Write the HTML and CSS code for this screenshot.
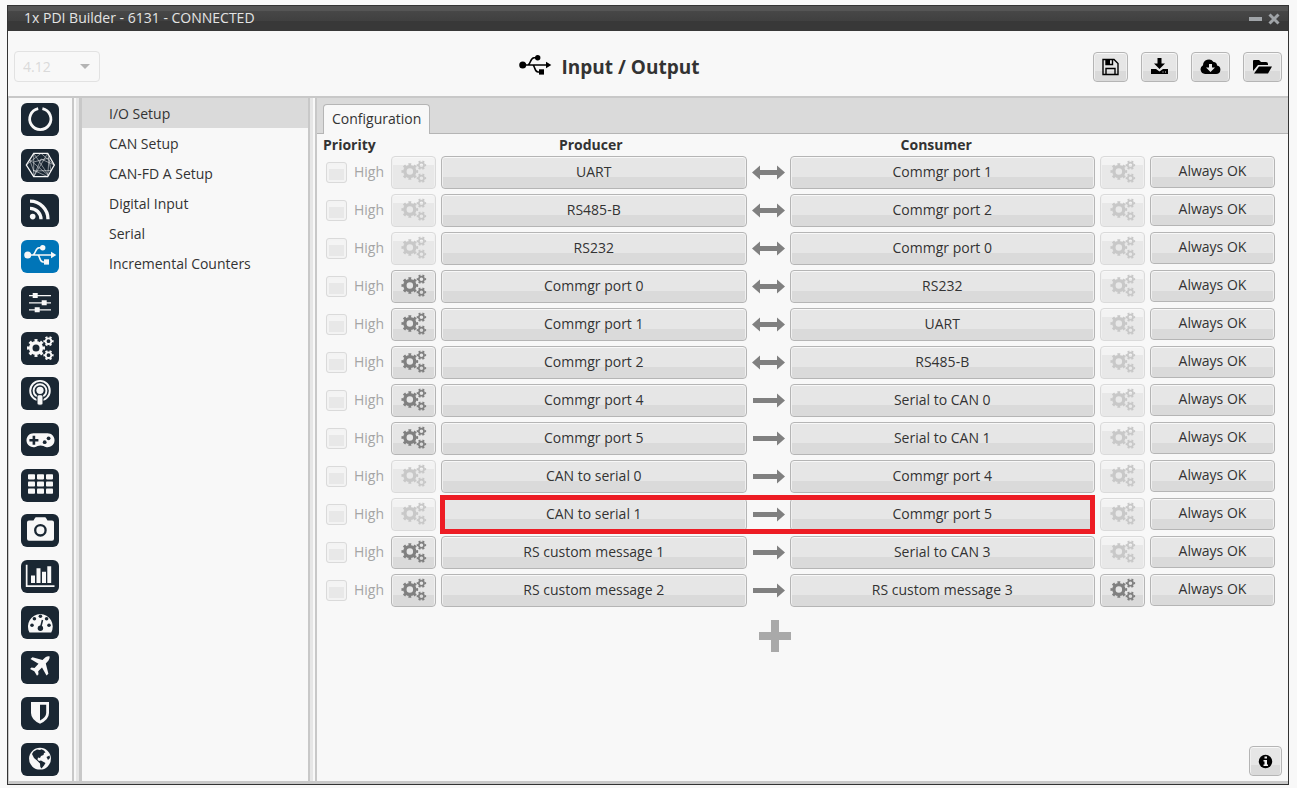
FILE: index.html
```html
<!DOCTYPE html>
<html lang="en">
<head>
    <meta charset="utf-8">
    <title>1x PDI Builder</title>
    <link rel="stylesheet" href="styles.css">
</head>
<body>
<!-- shared icons -->
<svg class="sprite" aria-hidden="true">
    <symbol id="usb" viewBox="0 0 38 33">
        <circle cx="6.7" cy="15" r="3.5"/>
        <path d="M6 15H31M12 15C15 14 14 8 18 7.7H22M17 15C19 16 18.5 22 22 22H25" fill="none" stroke="currentColor" stroke-width="1.6"/>
        <path d="M30 11.8L35.3 15L30 18.2Z"/>
        <circle cx="21.7" cy="7.7" r="2.7"/>
        <rect x="23" y="19.3" width="5" height="5.3"/>
    </symbol>
    <symbol id="gears" viewBox="0 0 28 24">
        <g fill="none" stroke="currentColor">
            <circle cx="9.5" cy="12" r="5.3" stroke-width="3.6"/>
            <circle cx="9.5" cy="12" r="7.5" stroke-width="3" pathLength="16" stroke-dasharray="1 1" stroke-dashoffset=".5"/>
            <circle cx="22" cy="5.2" r="2.8" stroke-width="1.8"/>
            <circle cx="22" cy="5.2" r="4.1" stroke-width="2" pathLength="12" stroke-dasharray="1 1" stroke-dashoffset=".5"/>
            <circle cx="22" cy="19.2" r="2.8" stroke-width="1.8"/>
            <circle cx="22" cy="19.2" r="4.1" stroke-width="2" pathLength="12" stroke-dasharray="1 1" stroke-dashoffset=".5"/>
        </g>
    </symbol>
    <symbol id="both" viewBox="0 0 33 15">
        <path d="M0 7.5L8 .5V5H25V.5L33 7.5L25 14.5V10H8V14.5Z"/>
    </symbol>
    <symbol id="right" viewBox="0 0 33 15">
        <path d="M1 5H25V.5L33 7.5L25 14.5V10H1Z"/>
    </symbol>
</svg>

<div class="window">
    <div class="titlebar">
        <span>1x PDI Builder - 6131 - CONNECTED</span>
        <div class="win-buttons">
            <button aria-label="Minimize"><svg width="13" height="12"><path d="M0 4H13V8H0Z"/></svg></button>
            <button aria-label="Close"><svg width="12" height="12"><path d="M1.5 1.5L10.5 10.5M10.5 1.5L1.5 10.5" stroke="currentColor" stroke-width="3"/></svg></button>
        </div>
    </div>

    <div class="header">
        <div class="version">
            <select aria-label="Version" disabled><option>4.12</option></select>
        </div>
        <h1><svg width="38" height="33"><use href="#usb"/></svg>Input / Output</h1>
        <div class="toolbar">
            <button class="btn" aria-label="Save"><svg width="17" height="18" viewBox="0 0 17 18"><path d="M1 1.5H12L16 5.5V16.5H1ZM4 16V10.5H13V16M4 2V6.5H10.5V2" fill="none" stroke="currentColor" stroke-width="1.4"/><path d="M4 2H8V6H4Z"/></svg></button>
            <button class="btn" aria-label="Download"><svg width="19" height="18" viewBox="0 0 19 18"><path d="M7.5 0H11.5V5.5H15L9.5 11L4 5.500H7.5ZM1 11H6L9.5 13.5L13 11H18V16H1Z"/><path d="M12.5 14H13.5M15 14H16" stroke="#ddd"/></svg></button>
            <button class="btn" aria-label="Download from cloud"><svg width="21" height="18" viewBox="0 0 21 18"><path d="M5 16A4.7 4.7 0 0 1 3 7.2A5.8 5.8 0 0 1 13.5 4A3.3 3.3 0 0 1 17 7.5A4.3 4.3 0 0 1 16 16Z"/><path d="M9 6H12V9.5H15L10.5 14L6 9.5H9Z" fill="#e6e6e6"/></svg></button>
            <button class="btn" aria-label="Open"><svg width="21" height="18" viewBox="0 0 21 18"><path d="M1 13V3Q1 2 2 2H7L9 4H14Q16 4 16 6V7H6ZM2 15.5L7 8.5H20L16 15.5Z"/></svg></button>
        </div>
    </div>

    <div class="body">
        <nav class="sidebar">
            <button aria-label="Power"><svg viewBox="0 0 38 33"><path d="M17.2 5.6A10.6 10.6 0 1 0 21.4 5.6" fill="none" stroke="currentColor" stroke-width="2.8"/></svg></button>
            <button aria-label="Mesh"><svg viewBox="0 0 38 33"><g fill="none" stroke="currentColor"><path d="M5.3 16L12.7 4.3H26.7L33.3 16L26.7 27.7H12.7Z" stroke-width="1.3"/><path d="M12.7 4.3V27.7L26.7 4.3L30 21.5L12.7 22L8.5 10.5L28 27L12.7 4.3M5.3 16L20 4.3L33.3 16L20 10L12.7 27.7M12 21L26.7 27.7L28 9L12.7 13" stroke-width=".5"/></g></svg></button>
            <button aria-label="Telemetry"><svg viewBox="0 0 38 33"><circle cx="11.7" cy="22.6" r="2.8"/><path d="M9 14.3A11 11 0 0 1 20 25.3M9 7.2A18 18 0 0 1 27 25.3" fill="none" stroke="currentColor" stroke-width="3.3"/></svg></button>
            <button class="active" aria-label="Input / Output"><svg><use href="#usb"/></svg></button>
            <button aria-label="Control"><svg viewBox="0 0 38 33"><path d="M8 9H30V10.3H8ZM8 16.2H30V17.5H8ZM8 23.3H30V24.6H8ZM11.7 7H16.7V12H11.7ZM20.7 14.3H25.7V19.3H20.7ZM13.7 21.3H18.7V26.3H13.7Z"/></svg></button>
            <button aria-label="Automations"><svg viewBox="0 0 38 33"><use href="#gears" x="5.5" y="4" width="28" height="24"/></svg></button>
            <button aria-label="Communications"><svg viewBox="0 0 38 33"><g fill="none" stroke="currentColor" stroke-width="1.9"><circle cx="19" cy="13.7" r="9.8"/><circle cx="19" cy="13.7" r="6.4"/></g><circle cx="19" cy="13.3" r="3.6"/><rect x="16" y="17.7" width="6" height="10.5" rx="2" stroke="#1a2733" stroke-width="1"/></svg></button>
            <button aria-label="Stick"><svg viewBox="0 0 38 33"><path d="M13 10.3H26A7 7 0 1 1 22.5 23Q19.5 22 16.5 23A7 7 0 1 1 13 10.3Z"/><path d="M12.9 12.8V21.8M8.4 17.3H17.4" stroke="#1a2733" stroke-width="2.6"/><g fill="#1a2733"><circle cx="27.6" cy="15.3" r="1.9"/><circle cx="23.7" cy="19.2" r="1.9"/></g></svg></button>
            <button aria-label="Variables"><svg viewBox="0 0 38 33"><g id="cells"><rect x="7" y="5.2" width="7" height="5.2" rx=".8"/><rect x="16" y="5.2" width="7" height="5.2" rx=".8"/><rect x="25" y="5.2" width="7" height="5.2" rx=".8"/></g><use href="#cells" y="7.2"/><use href="#cells" y="14.4"/></svg></button>
            <button aria-label="Camera"><svg viewBox="0 0 38 33"><path d="M8 6.5H12.5L14 4Q14.3 3.3 15 3.3H24Q24.7 3.3 25 4L26.5 6.5H31Q33 6.5 33 8.5V24.7Q33 26.7 31 26.7H8Q6 26.7 6 24.7V8.5Q6 6.5 8 6.5Z"/><circle cx="19.4" cy="16.3" r="5.2" fill="none" stroke="#1a2733" stroke-width="2.3"/></svg></button>
            <button aria-label="Charts"><svg viewBox="0 0 38 33"><path d="M4.8 4.7H6.5V25.2H33.5V26.9H4.8ZM10 15.5H14V23H10ZM15.5 8.3H19.5V23H15.5ZM21 11.7H25V23H21ZM26.3 6.3H30.2V23H26.3Z"/></svg></button>
            <button aria-label="Gauges"><svg viewBox="0 0 38 33"><path d="M8.5 26.5A12.4 12.4 0 1 1 30.2 26.5Z"/><g fill="#1a2733"><circle cx="11" cy="19.3" r="1.8"/><circle cx="13.4" cy="12.8" r="1.8"/><circle cx="19.4" cy="10.3" r="1.8"/><circle cx="25.6" cy="12.8" r="1.8"/><circle cx="28" cy="19.3" r="1.8"/><circle cx="19.4" cy="22.3" r="2.7"/></g><path d="M19.5 22L21.5 14" stroke="#1a2733" stroke-width="1.5"/></svg></button>
            <button aria-label="Plane"><svg viewBox="0 0 38 33"><path d="M28.5 5.3Q26.5 4.8 24.5 6.3L21.5 9L11.5 6.2L9.5 8L17.5 12.8L13.5 17L10.5 16.5L9 18L13.3 20.3L16 24.8L17.5 23.3L17.2 20.3L21 16.5L25.5 24.5L27.4 22.7L24.8 12.5L27.5 9.6Q29.3 7.5 28.5 5.3Z"/></svg></button>
            <button aria-label="Safety"><svg viewBox="0 0 38 33"><path d="M10 5H28V16Q28 22.5 19 26.8Q10 22.5 10 16Z"/><path d="M19 7.8H25.2V16Q25.2 20 19 23.6Z" fill="#1a2733"/></svg></button>
            <button aria-label="World"><svg viewBox="0 0 38 33"><circle cx="19" cy="15.7" r="10.9"/><path d="M12.5 8.5L16 6.5L19 7L20.5 6.3L23 7.5L24.5 9.5L23 10L22.5 12L20 13L19 15L17 14.5L16.5 16.5L18 18L20 17.5L24.5 20L23 22.5L20.5 25.5L19.3 24L19 20.5L16 17.5L13 15L11 11Z" fill="#1a2733"/><path d="M25.5 14L28.5 12.5L29 15L27 17Z" fill="#1a2733"/></svg></button>
        </nav>
        <div class="splitter left"></div>
        <nav class="menu">
            <a href="#" class="selected">I/O Setup</a>
            <a href="#">CAN Setup</a>
            <a href="#">CAN-FD A Setup</a>
            <a href="#">Digital Input</a>
            <a href="#">Serial</a>
            <a href="#">Incremental Counters</a>
        </nav>
        <div class="splitter right"></div>
        <main>
            <div class="tabs"><button class="tab">Configuration</button></div>
            <table>
                <colgroup>
                    <col class="c-priority"><col class="c-gear"><col><col class="c-arrow"><col><col class="c-gear"><col class="c-status">
                </colgroup>
                <thead>
                    <tr><th class="first">Priority</th><th></th><th class="producer">Producer</th><th></th><th class="consumer">Consumer</th><th></th><th></th></tr>
                </thead>
                <tbody id="rows"></tbody>
            </table>
            <div class="add"><button aria-label="Add"><svg width="32" height="32"><path d="M12 0H20V12H32V20H20V32H12V20H0V12H12Z"/></svg></button></div>
            <div class="footer">
                <button class="btn" aria-label="Info"><svg width="15" height="15" viewBox="0 0 15 15"><circle cx="7.5" cy="7.5" r="6.7"/><path d="M6.5 2.5H9V4.5H6.5ZM5.5 6H9V10.5H10V12H5.5V10.5H6.5V7.5H5.5Z" fill="#eee"/></svg></button>
            </div>
        </main>
    </div>
</div>

<script>
    // producer, consumer, arrow, producer settings, consumer settings
    const links = [
        ["UART", "Commgr port 1", "both", false, false],
        ["RS485-B", "Commgr port 2", "both", false, false],
        ["RS232", "Commgr port 0", "both", false, false],
        ["Commgr port 0", "RS232", "both", true, false],
        ["Commgr port 1", "UART", "both", true, false],
        ["Commgr port 2", "RS485-B", "both", true, false],
        ["Commgr port 4", "Serial to CAN 0", "right", true, false],
        ["Commgr port 5", "Serial to CAN 1", "right", true, false],
        ["CAN to serial 0", "Commgr port 4", "right", false, false],
        ["CAN to serial 1", "Commgr port 5", "right", false, false],
        ["RS custom message 1", "Serial to CAN 3", "right", true, false],
        ["RS custom message 2", "RS custom message 3", "right", true, true]
    ];
    const marked = 9;

    function gear(enabled) {
        return `<button class="btn gear" aria-label="Settings" ${enabled ? "" : "disabled"}><svg width="26" height="23"><use href="#gears"/></svg></button>`;
    }

    document.getElementById("rows").innerHTML = links.map(([from, to, arrow, g1, g2], i) => `
        <tr>
            <td><label class="high"><input type="checkbox" disabled>High</label></td>
            <td>${gear(g1)}</td>
            <td class="from"><button class="btn">${from}</button>${i === marked ? '<div class="mark"></div>' : ""}</td>
            <td><svg class="arrow" width="33" height="15"><use href="#${arrow}"/></svg></td>
            <td><button class="btn">${to}</button></td>
            <td>${gear(g2)}</td>
            <td><button class="btn status">Always OK</button></td>
        </tr>`).join("");
</script>
</body>
</html>
```
FILE: styles.css
```css
* {
  box-sizing: border-box;
}

body {
  margin: 0;
  padding: 5px 8px 3px 7px;
  background-color: #f8f8f8;
  color: #333333;
  font-family: "Open Sans", "Noto Sans", sans-serif;
  font-size: 14px;
  line-height: 20px;
}

button, select {
  font: inherit;
  color: inherit;
}

svg {
  display: block;
  fill: currentColor;
}

.sprite {
  position: absolute;
  width: 0;
  height: 0;
}

.window {
  display: flex;
  flex-direction: column;
  min-height: calc(100vh - 8px);
  border: 1px solid #333333;
}

.titlebar {
  display: flex;
  justify-content: space-between;
  align-items: center;
  height: 25px;
  padding: 0 8px 2px 16px;
  background: linear-gradient(#555555 0 5px, #474747 5px, #404040 15px, #383838 15px);
  color: #e4e4e4;
}

.win-buttons {
  display: flex;
  gap: 6px;
  padding-top: 2px;
}

.win-buttons button, .add button {
  padding: 0;
  border: 0;
  background: none;
  color: #a0a4a8;
}

.header {
  display: flex;
  align-items: center;
  height: 65px;
  padding: 6px 6px 0 6px;
}

.version {
  position: relative;
  width: 86px;
}

.version select {
  appearance: none;
  width: 100%;
  height: 31px;
  padding: 0 8px;
  border: 1px solid #e2e2e2;
  border-radius: 4px;
  background: none;
  color: #dadada;
  opacity: 1;
}

.version::after {
  content: "";
  position: absolute;
  top: 13px;
  right: 10px;
  border: 5px solid transparent;
  border-top-color: #b4b4b4;
  border-bottom: 0;
}

h1 {
  display: flex;
  flex: 1;
  justify-content: center;
  align-items: center;
  gap: 8px;
  margin: 0;
  padding-left: 22px;
  font-size: 19px;
  line-height: 28px;
}

h1 svg {
  color: #000000;
}

.toolbar {
  display: flex;
  gap: 13px;
}

.btn {
  display: flex;
  justify-content: center;
  align-items: center;
  width: 100%;
  height: 33px;
  padding: 0 0 2px;
  border: 1px solid #b5b5b5;
  border-radius: 4px;
  background: linear-gradient(#e6e6e6 66%, #dadada 66%);
  box-shadow: inset 0 1px #f8f8f8, inset 1px 0 #f0f0f0, inset -1px 0 #f0f0f0;
}

.toolbar .btn, .footer .btn {
  width: auto;
  height: 30px;
  padding: 0 8px;
  color: #000000;
}

.body {
  display: flex;
  flex: 1;
  border-top: 2px solid #c8c8c8;
  border-bottom: 3px solid #c8c8c8;
}

.sidebar {
  display: flex;
  flex-direction: column;
  justify-content: space-between;
  width: 66px;
  padding: 5px 12px;
  border-left: 1px solid #c8c8c8;
  border-right: 2px solid #c8c8c8;
}

.sidebar button {
  width: 38px;
  height: 33px;
  padding: 0;
  border: 0;
  border-radius: 6px;
  background-color: #1a2733;
  color: #f8f8f8;
}

.sidebar .active {
  background-color: #0075b8;
}

.sidebar svg {
  width: 38px;
  height: 33px;
}

.splitter {
  width: 5px;
}

.left {
  background: linear-gradient(to right, #f8f8f8 2px, #e6e6e6 2px);
}

.right {
  background: linear-gradient(to right, #e6e6e6 3px, #f8f8f8 3px);
}

.menu {
  width: 231px;
  border-left: 3px solid #c8c8c8;
  border-right: 2px solid #c8c8c8;
}

.menu a {
  display: block;
  height: 30px;
  padding-left: 27px;
  color: #333333;
  line-height: 32px;
  text-decoration: none;
}

.menu .selected {
  background-color: #dadada;
}

main {
  display: flex;
  flex: 1;
  flex-direction: column;
  border-left: 2px solid #c8c8c8;
}

.tabs {
  display: flex;
  align-items: flex-end;
  height: 36px;
  padding-left: 6px;
  border-bottom: 1px solid #b5b5b5;
  background-color: #dadada;
}

.tab {
  height: 30px;
  margin-bottom: -1px;
  padding: 0 8px 2px;
  border: 1px solid #b5b5b5;
  border-bottom: 0;
  border-radius: 4px 4px 0 0;
  background-color: #f8f8f8;
}

table {
  width: calc(100% - 9px);
  margin: -5px 0 0 1px;
  table-layout: fixed;
  border-spacing: 5px;
}

th, td {
  padding: 0;
}

td {
  vertical-align: top;
}

th {
  height: 17px;
  padding-top: 4px;
  line-height: 13px;
}

.first {
  text-align: left;
}

.producer {
  padding-right: 6px;
}

.consumer {
  padding-right: 12px;
}

.c-priority {
  width: 63px;
}

.c-gear {
  width: 45px;
}

.c-arrow {
  width: 33px;
}

.c-status {
  width: 125px;
}

.high {
  display: flex;
  align-items: center;
  gap: 7px;
  height: 32px;
  padding-left: 3px;
  color: #a5a5a5;
}

.high input {
  appearance: none;
  width: 21px;
  height: 21px;
  margin: 0;
  border: 1px solid #dadada;
  border-radius: 3px;
  background: linear-gradient(#f4f4f4 30%, #e8e8e8 30%);
  box-shadow: inset 0 0 0 2px #f3f3f3;
}

.gear {
  color: #808080;
}

.gear:disabled {
  border-color: #dadada;
  background: linear-gradient(#f3f3f3 26%, #e8e8e8 26%);
  color: #c8c8c8;
}

.status {
  height: 32px;
}

.arrow {
  margin-top: 9px;
  color: #808080;
}

.from {
  position: relative;
}

.mark {
  position: absolute;
  top: -3px;
  left: -1px;
  width: calc(200% + 44px);
  height: 39px;
  border: 5px solid #ed1c24;
  pointer-events: none;
}

.add {
  display: flex;
  justify-content: center;
  padding: 8px 55px 0 0;
}

.add button {
  color: #a9a9a9;
}

.footer {
  display: flex;
  justify-content: flex-end;
  margin-top: auto;
  padding: 0 6px 5px 0;
}
```
